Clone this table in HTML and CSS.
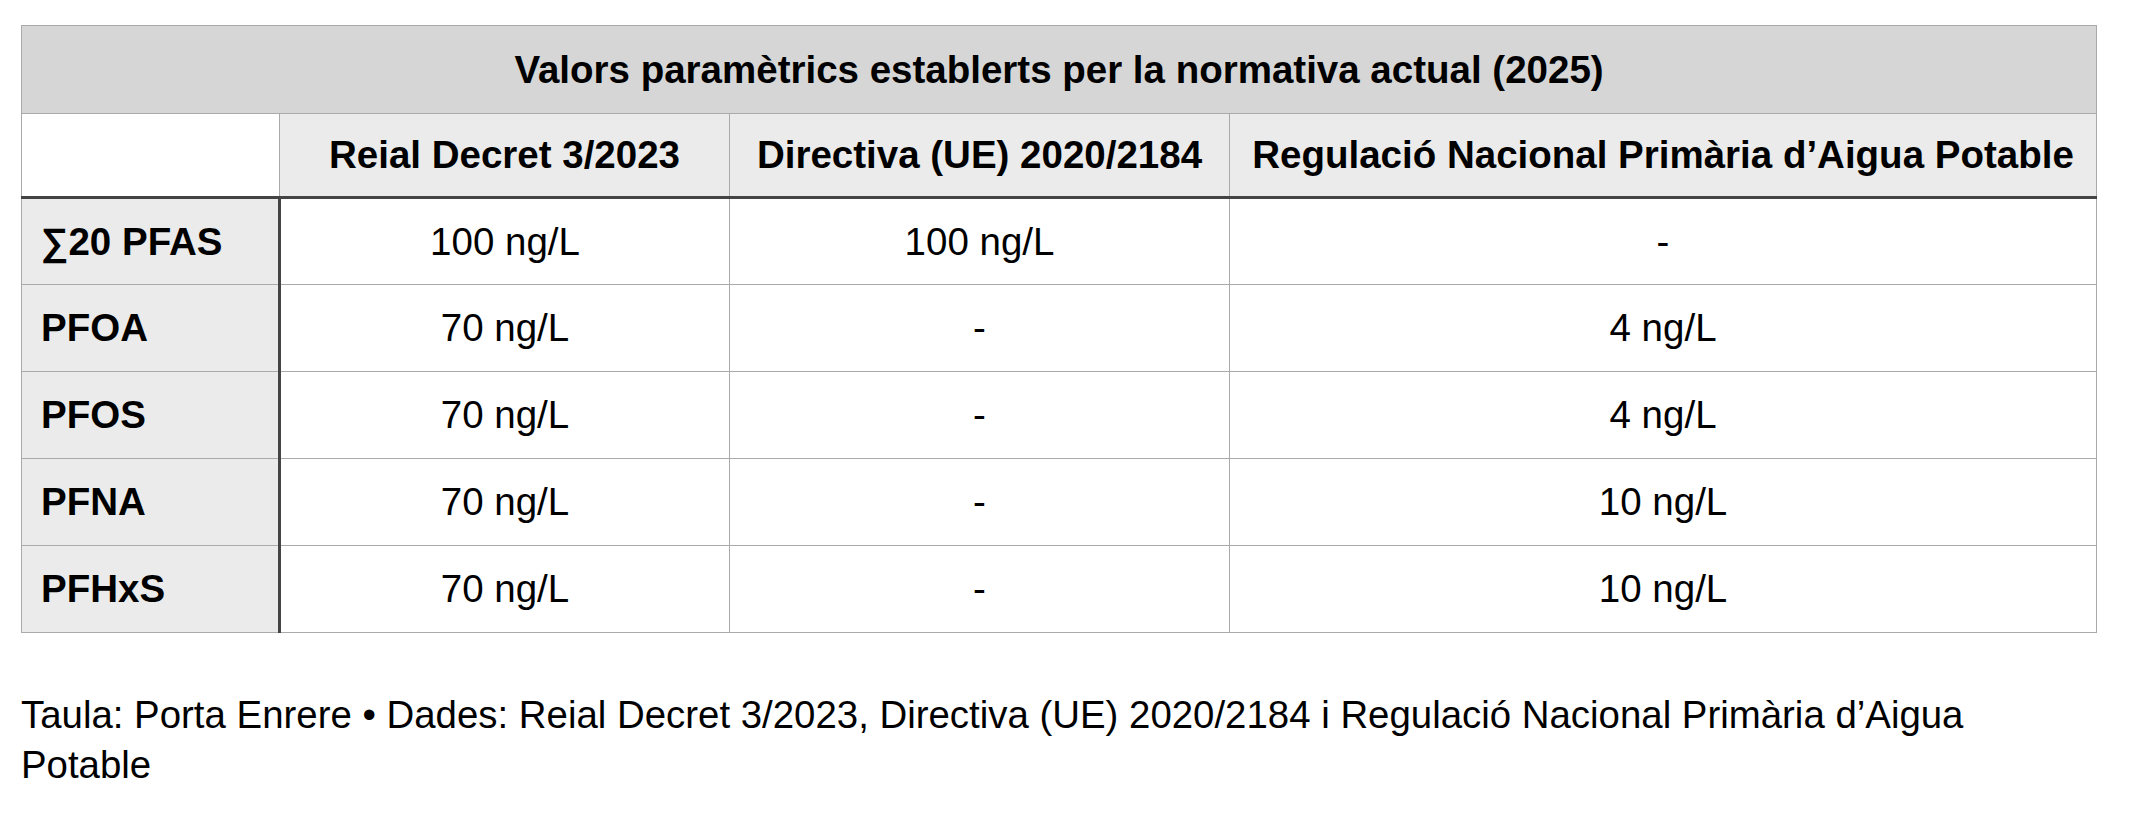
FILE: index.html
```html
<!DOCTYPE html>
<html lang="ca">
<head>
    <meta charset="UTF-8">
    <meta name="viewport" content="width=device-width, initial-scale=1.0">
    <title>Valors paramètrics PFAS</title>
    <link rel="stylesheet" href="styles.css">
</head>
<body>
    <div class="container">
        <table class="pfas-table">
            <colgroup>
                <col class="col-name">
                <col class="col-rd">
                <col class="col-ue">
                <col class="col-us">
            </colgroup>
            <thead>
                <tr class="title-row">
                    <th colspan="4">Valors paramètrics establerts per la normativa actual (2025)</th>
                </tr>
                <tr class="head-row">
                    <th class="blank"></th>
                    <th>Reial Decret 3/2023</th>
                    <th>Directiva (UE) 2020/2184</th>
                    <th>Regulació Nacional Primària d’Aigua Potable</th>
                </tr>
            </thead>
            <tbody>
                <tr>
                    <th>∑20 PFAS</th>
                    <td>100 ng/L</td>
                    <td>100 ng/L</td>
                    <td>-</td>
                </tr>
                <tr>
                    <th>PFOA</th>
                    <td>70 ng/L</td>
                    <td>-</td>
                    <td>4 ng/L</td>
                </tr>
                <tr>
                    <th>PFOS</th>
                    <td>70 ng/L</td>
                    <td>-</td>
                    <td>4 ng/L</td>
                </tr>
                <tr>
                    <th>PFNA</th>
                    <td>70 ng/L</td>
                    <td>-</td>
                    <td>10 ng/L</td>
                </tr>
                <tr>
                    <th>PFHxS</th>
                    <td>70 ng/L</td>
                    <td>-</td>
                    <td>10 ng/L</td>
                </tr>
            </tbody>
        </table>

        <p class="source">Taula: Porta Enrere • Dades: Reial Decret 3/2023, Directiva (UE) 2020/2184 i Regulació Nacional Primària d’Aigua Potable</p>
    </div>
</body>
</html>
```

FILE: styles.css
```css
* {
    margin: 0;
    padding: 0;
    box-sizing: border-box;
}

body {
    background: #fff;
    color: #000;
    font-family: 'Liberation Sans', Arial, sans-serif;
}

.container {
    width: 2075px;
    margin: 25px 0 0 21px;
}

.pfas-table {
    width: 2075px;
    table-layout: fixed;
    border-collapse: collapse;
    border: 1px solid #aaa;
    font-size: 38.5px;
}

.col-name { width: 258px; }
.col-rd { width: 450px; }
.col-ue { width: 500px; }
.col-us { width: 867px; }

.pfas-table th,
.pfas-table td {
    border: 1px solid #aaa;
    text-align: center;
    vertical-align: middle;
    font-weight: normal;
    white-space: nowrap;
}

.pfas-table .title-row th {
    height: 88px;
    background: #d6d6d6;
    font-weight: bold;
}

.pfas-table .head-row th {
    height: 84px;
    background: #ebebeb;
    font-weight: bold;
    border-bottom: 3px solid #444;
}

.pfas-table .head-row th.blank {
    background: #fff;
}

.pfas-table tbody th,
.pfas-table tbody td {
    height: 87px;
}

.pfas-table tbody th {
    background: #ebebeb;
    font-weight: bold;
    text-align: left;
    padding-left: 19px;
    border-right: 3px solid #444;
}

.source {
    margin-top: 57px;
    font-size: 38.4px;
    line-height: 50px;
}
```
